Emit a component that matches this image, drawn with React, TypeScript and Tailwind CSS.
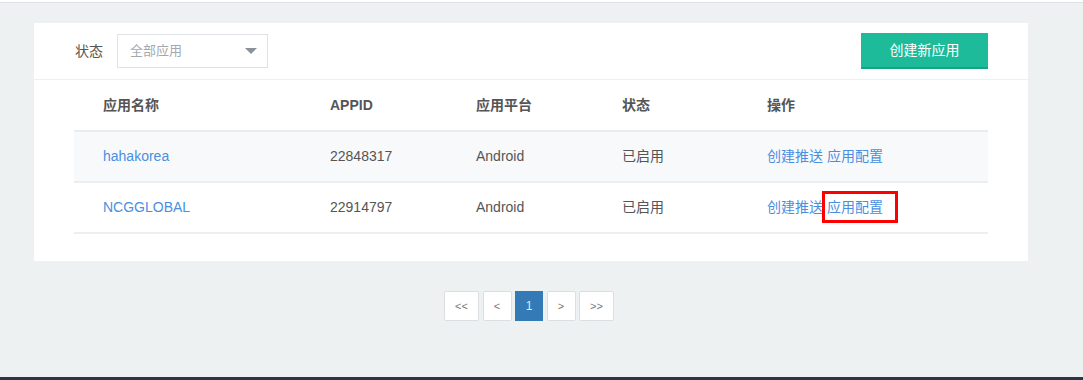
import React from "react";

const font = { fontFamily: '"Liberation Sans", "Noto Sans CJK SC", Arial, sans-serif' };

const rows = [
  { name: "hahakorea", id: "22848317", platform: "Android", status: "已启用", bg: "bg-[#f8f9fb]" },
  { name: "NCGGLOBAL", id: "22914797", platform: "Android", status: "已启用", bg: "bg-white" },
];

export default function App() {
  return (
    <div className="w-[1083px] h-[380px] bg-[#eef1f2] flex flex-col overflow-hidden" style={font}>
      <div className="h-[2px] bg-white" />
      <div className="h-px bg-[#dde1e6]" />
      <div className="flex-1 pt-[20px]">
        <div className="ml-[34px] w-[994px] bg-white">
          <div className="h-[57px] border-b border-[#eef0f2] flex items-center pl-[41px] pr-[40px]">
            <span className="text-[14px] text-[#555]">状态</span>
            <div className="ml-[14px] w-[151px] h-[34px] border border-[#dfe2e6] flex items-center pl-[12px] pr-[10px] justify-between">
              <span className="text-[13px] text-[#a5a9ae]">全部应用</span>
              <svg width="12" height="7" viewBox="0 0 12 7"><path d="M0 0 L12 0 L6 6 Z" fill="#8a9199" /></svg>
            </div>
            <div className="flex-1" />
            <button className="w-[127px] h-[36px] bg-[#1dbb99] border-b-2 border-[#17a385] text-white text-[14px] flex items-center justify-center">创建新应用</button>
          </div>
          <div className="mx-[40px] pb-[27px]">
            <div className="flex h-[52px] items-center border-b-2 border-[#eaedf0] text-[14px] font-bold text-[#555]">
              <div className="w-[256px] pl-[29px]">应用名称</div>
              <div className="w-[146px]">APPID</div>
              <div className="w-[146px]">应用平台</div>
              <div className="w-[145px]">状态</div>
              <div className="flex-1">操作</div>
            </div>
            {rows.map((r, i) => (
              <div key={r.name} className={`flex h-[51px] items-center border-b-2 border-[#eceff2] text-[14px] text-[#555] ${r.bg}`}>
                <div className="w-[256px] pl-[29px] text-[#4a8fdf]">{r.name}</div>
                <div className="w-[146px]">{r.id}</div>
                <div className="w-[146px]">{r.platform}</div>
                <div className="w-[145px]">{r.status}</div>
                <div className="flex-1 text-[#4a8fdf] flex">
                  <span>创建推送</span>
                  <span className="relative ml-[4px]">
                    应用配置
                    {i === 1 && (
                      <span className="absolute left-[-5px] top-[-6px] w-[76px] h-[32px] border-[3px] border-[#ff0000]" />
                    )}
                  </span>
                </div>
              </div>
            ))}
          </div>
        </div>
        <div className="mt-[30px] ml-[444px] flex gap-[3.5px] text-[11px]">
          <div className="w-[35px] h-[30px] border border-[#dcdfe2] rounded-[2px] bg-white flex items-center justify-center text-[#777]">&lt;&lt;</div>
          <div className="w-[29px] h-[30px] border border-[#dcdfe2] rounded-[2px] bg-white flex items-center justify-center text-[#777]">&lt;</div>
          <div className="w-[28px] h-[30px] bg-[#337ab7] flex items-center justify-center text-[#dfe9f3] text-[12px]">1</div>
          <div className="w-[29px] h-[30px] border border-[#dcdfe2] rounded-[2px] bg-white flex items-center justify-center text-[#777]">&gt;</div>
          <div className="w-[35px] h-[30px] border border-[#dcdfe2] rounded-[2px] bg-white flex items-center justify-center text-[#777]">&gt;&gt;</div>
        </div>
      </div>
      <div className="h-[3px] bg-[#2b3640]" />
    </div>
  );
}
